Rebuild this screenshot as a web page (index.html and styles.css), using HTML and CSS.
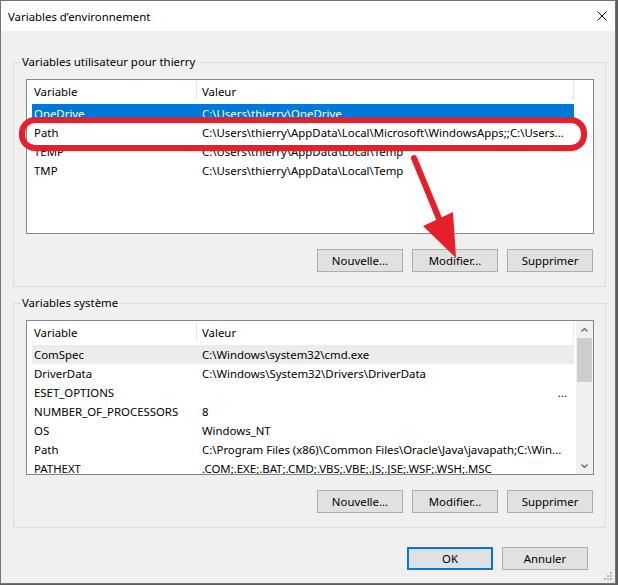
FILE: index.html
```html
<!DOCTYPE html>
<html>
	<head>
		<meta charset="UTF-8">
		<title>Variables d’environnement</title>
		<link rel="stylesheet" href="styles.css">
	</head>
	<body>
		<div class="dialog">
			<div class="titlebar">
				<span class="title">Variables d’environnement</span>
				<svg class="close" width="10" height="10" viewBox="0 0 10 10">
					<path d="M0.5 0.5L9.5 9.5M9.5 0.5L0.5 9.5" stroke="#000" stroke-width="1" fill="none"/>
				</svg>
			</div>

			<div class="content">
				<!-- variables utilisateur -->
				<div class="group">
					<div class="group-title">Variables utilisateur pour thierry</div>
					<div class="list">
						<div class="list-body">
							<div class="list-head">
								<div class="head-name">Variable</div>
								<div class="head-value">Valeur</div>
							</div>
							<div class="row selected">
								<div class="cell-name">OneDrive</div>
								<div class="cell-value">C:\Users\thierry\OneDrive</div>
							</div>
							<div class="row">
								<div class="cell-name">Path</div>
								<div class="cell-value">C:\Users\thierry\AppData\Local\Microsoft\WindowsApps;;C:\Users...</div>
							</div>
							<div class="row">
								<div class="cell-name">TEMP</div>
								<div class="cell-value">C:\Users\thierry\AppData\Local\Temp</div>
							</div>
							<div class="row">
								<div class="cell-name">TMP</div>
								<div class="cell-value">C:\Users\thierry\AppData\Local\Temp</div>
							</div>
						</div>
					</div>
					<div class="buttons">
						<button class="btn">Nouvelle...</button>
						<button class="btn">Modifier...</button>
						<button class="btn">Supprimer</button>
					</div>
				</div>

				<!-- variables système -->
				<div class="group group-sys">
					<div class="group-title">Variables système</div>
					<div class="list">
						<div class="list-body">
							<div class="list-head">
								<div class="head-name">Variable</div>
								<div class="head-value">Valeur</div>
							</div>
							<div class="row inactive">
								<div class="cell-name">ComSpec</div>
								<div class="cell-value">C:\Windows\system32\cmd.exe</div>
							</div>
							<div class="row">
								<div class="cell-name">DriverData</div>
								<div class="cell-value">C:\Windows\System32\Drivers\DriverData</div>
							</div>
							<div class="row">
								<div class="cell-name">ESET_OPTIONS</div>
								<div class="cell-value right">...</div>
							</div>
							<div class="row">
								<div class="cell-name">NUMBER_OF_PROCESSORS</div>
								<div class="cell-value">8</div>
							</div>
							<div class="row">
								<div class="cell-name">OS</div>
								<div class="cell-value">Windows_NT</div>
							</div>
							<div class="row">
								<div class="cell-name">Path</div>
								<div class="cell-value">C:\Program Files (x86)\Common Files\Oracle\Java\javapath;C:\Win...</div>
							</div>
							<div class="row">
								<div class="cell-name">PATHEXT</div>
								<div class="cell-value">.COM;.EXE;.BAT;.CMD;.VBS;.VBE;.JS;.JSE;.WSF;.WSH;.MSC</div>
							</div>
						</div>
						<div class="scrollbar">
							<div class="arrow">
								<svg width="7" height="4" viewBox="0 0 7 4"><path d="M0.5 3.5L3.5 0.5L6.5 3.5" stroke="#606060" stroke-width="1.2" fill="none"/></svg>
							</div>
							<div class="thumb"></div>
							<div class="track"></div>
							<div class="arrow">
								<svg width="7" height="4" viewBox="0 0 7 4"><path d="M0.5 0.5L3.5 3.5L6.5 0.5" stroke="#606060" stroke-width="1.2" fill="none"/></svg>
							</div>
						</div>
					</div>
					<div class="buttons">
						<button class="btn">Nouvelle...</button>
						<button class="btn">Modifier...</button>
						<button class="btn">Supprimer</button>
					</div>
				</div>

				<div class="footer">
					<button class="btn btn-default">OK</button>
					<button class="btn">Annuler</button>
				</div>
			</div>

			<!-- poignée de redimensionnement -->
			<svg class="grip" width="8" height="8" viewBox="0 0 8 8">
				<g fill="#b8b8b8">
					<rect x="6" y="0" width="2" height="2"/>
					<rect x="3" y="3" width="2" height="2"/>
					<rect x="6" y="3" width="2" height="2"/>
					<rect x="0" y="6" width="2" height="2"/>
					<rect x="3" y="6" width="2" height="2"/>
					<rect x="6" y="6" width="2" height="2"/>
				</g>
			</svg>

			<!-- annotation : Path entouré + flèche vers Modifier -->
			<svg class="marks" width="616" height="584" viewBox="0 0 616 584">
				<rect x="22" y="120" width="562" height="28" rx="13" fill="none" stroke="#e5202b" stroke-width="6"/>
				<path d="M414 158L447 238" stroke="#e5202b" stroke-width="6" stroke-linecap="round" fill="none"/>
				<polygon points="423,226 453,212 456,258" fill="#e5202b"/>
			</svg>
		</div>
	</body>
</html>
```

FILE: styles.css
```css
* {margin: 0; padding: 0; box-sizing: border-box;}
body {
	background: #5f5f5f;
	font-family: "Noto Sans", "Liberation Sans", sans-serif;
	font-size: 11.4px;
	color: #000;
}

.dialog {
	position: relative;
	width: 616px;
	height: 584px;
	border: 1px solid #747474;
	background: #f0f0f0;
	display: flex;
	flex-direction: column;
}

.titlebar {
	height: 30px;
	background: #fff;
	display: flex;
	align-items: center;
	padding: 0 8px 0 7px;
}
.close {margin-left: auto;}

.content {
	flex: 1;
	padding: 31px 9px 0 12px;
	display: flex;
	flex-direction: column;
}

.group {
	border: 1px solid #dcdcdc;
	padding: 0 11px 14px 12px;
}
.group-sys {margin-top: 16px;}
.group-title {
	width: max-content;
	height: 16px;
	margin: -9px 0 0 -6px;
	padding: 0 2px;
	line-height: 16px;
	background: #f0f0f0;
}

.list {
	margin-top: 9px;
	height: 155px;
	border: 1px solid #828790;
	background: #fff;
	display: flex;
	overflow: hidden;
}
.list-body {
	flex: 1;
	overflow: hidden;
}
.list-head {
	display: flex;
	height: 24px;
	align-items: center;
}
.head-name, .head-value {
	height: 24px;
	line-height: 24px;
	background: linear-gradient(#e5e5e5, #e5e5e5) no-repeat right 0 top 1px / 1px 19px;
}
.head-name {width: 170px; padding-left: 7px;}
.head-value {width: 377px; padding-left: 5px;}

.row {
	display: flex;
	height: 19px;
	line-height: 19px;
	width: 542px;
	margin-left: 5px;
	white-space: nowrap;
}
.row.selected {background: #0078d7; color: #fff;}
.row.inactive {background: #ececec;}
.cell-name {width: 165px; padding-left: 2px; overflow: hidden;}
.cell-value {flex: 1; padding-left: 5px; overflow: hidden;}
.cell-value.right {text-align: right; padding-right: 7px;}

.scrollbar {
	width: 17px;
	background: #f0f0f0;
	display: flex;
	flex-direction: column;
}
.arrow {
	height: 17px;
	display: flex;
	align-items: center;
	justify-content: center;
}
.thumb {
	height: 44px;
	margin: 0 1px;
	background: #cdcdcd;
}
.track {flex: 1;}

.buttons {
	margin-top: 15px;
	padding-right: 1px;
	display: flex;
	justify-content: flex-end;
	gap: 9px;
}
.btn {
	width: 86px;
	height: 23px;
	border: 1px solid #adadad;
	background: #e1e1e1;
	font: inherit;
	color: #000;
}
.btn-default {border: 2px solid #0078d7;}

.footer {
	margin-top: 19px;
	padding-right: 18px;
	display: flex;
	justify-content: flex-end;
	gap: 9px;
}

.grip {
	position: absolute;
	right: 3px;
	bottom: 3px;
}

.marks {
	position: absolute;
	left: -1px;
	top: -1px;
	pointer-events: none;
}
```
